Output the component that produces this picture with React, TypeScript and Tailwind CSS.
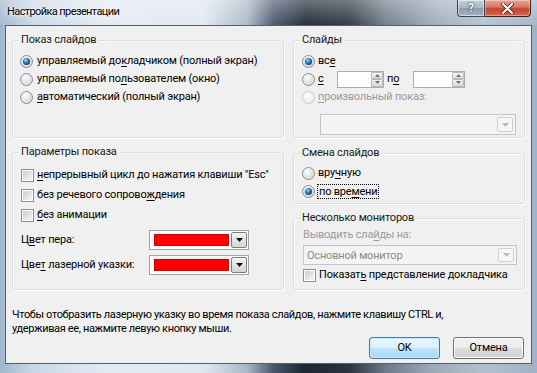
import React from "react";

function U({ children }: { children: React.ReactNode }) {
  return <span className="underline underline-offset-[2px] decoration-[1px]">{children}</span>;
}

function Radio({ checked = false, disabled = false }: { checked?: boolean; disabled?: boolean }) {
  return (
    <svg width="13" height="13" viewBox="0 0 13 13" className="shrink-0">
      <defs>
        <radialGradient id="rfill" cx="0.35" cy="0.3" r="0.8">
          <stop offset="0" stopColor="#ffffff" />
          <stop offset="1" stopColor="#cfd1d4" />
        </radialGradient>
        <radialGradient id="rfilld" cx="0.35" cy="0.3" r="0.8">
          <stop offset="0" stopColor="#ffffff" />
          <stop offset="1" stopColor="#ececec" />
        </radialGradient>
        <radialGradient id="rdot" cx="0.4" cy="0.35" r="0.7">
          <stop offset="0" stopColor="#a8e0fb" />
          <stop offset="0.45" stopColor="#2c7fc0" />
          <stop offset="1" stopColor="#0c3a66" />
        </radialGradient>
      </defs>
      <circle cx="6.5" cy="6.5" r="6" fill={disabled ? "url(#rfilld)" : "url(#rfill)"} stroke={disabled ? "#c9c9c9" : "#8a8c8f"} strokeWidth="1" />
      <circle cx="6.5" cy="6.5" r="4.6" fill="none" stroke={disabled ? "#eeeeee" : "#e2e3e5"} strokeWidth="0.8" />
      {checked && <circle cx="6.5" cy="6.5" r="3.6" fill="url(#rdot)" />}
    </svg>
  );
}

function Check() {
  return (
    <div className="w-[13px] h-[13px] shrink-0 border border-[#8e8f8f] bg-white p-[1px]">
      <div className="w-full h-full bg-gradient-to-br from-[#c9ccd1] to-[#f7f7f7]" />
    </div>
  );
}

function SmallArrow({ dir, color }: { dir: "up" | "down"; color: string }) {
  return (
    <svg width="5" height="3" viewBox="0 0 5 3">
      {dir === "up" ? <polygon points="0,3 5,3 2.5,0" fill={color} /> : <polygon points="0,0 5,0 2.5,3" fill={color} />}
    </svg>
  );
}

function DownArrow({ color }: { color: string }) {
  return (
    <svg width="7" height="4" viewBox="0 0 7 4">
      <polygon points="0,0 7,0 3.5,4" fill={color} />
    </svg>
  );
}

function Spin({ w }: { w: string }) {
  return (
    <div className={`${w} h-[17px] border border-[#abadb3] bg-white flex justify-end shrink-0`}>
      <div className="w-[12px] h-full flex flex-col">
        <div className="flex-1 border border-[#b5b8bd] rounded-[1px] bg-gradient-to-b from-[#f5f6f7] to-[#dfe2e6] flex items-center justify-center">
          <SmallArrow dir="up" color="#6b6f75" />
        </div>
        <div className="flex-1 border border-[#b5b8bd] rounded-[1px] bg-gradient-to-b from-[#f0f1f3] to-[#d8dbe0] flex items-center justify-center">
          <SmallArrow dir="down" color="#6b6f75" />
        </div>
      </div>
    </div>
  );
}

function DisabledCombo({ text, w, h }: { text?: string; w: string; h: string }) {
  return (
    <div className={`${w} ${h} border border-[#c5c5c5] bg-[#f4f4f4] flex items-center pl-[3px] pr-[2px]`}>
      <span className="flex-1 text-[#8b8b8b] leading-none whitespace-nowrap">{text}</span>
      <div className="w-[16px] h-[calc(100%-4px)] border border-[#d0d0d0] rounded-[2px] bg-[#f7f7f7] flex items-center justify-center">
        <DownArrow color="#b8b8b8" />
      </div>
    </div>
  );
}

function ColorPicker() {
  return (
    <div className="w-[100px] h-[20px] shrink-0 border border-[#a0a3a8] bg-white flex items-center pl-[4px] pr-[1px]">
      <div className="w-[76px] h-[12px] bg-[#ff0000] border border-[#d40000]" />
      <div className="ml-[2px] w-[16px] h-[16px] border border-[#7a7d82] rounded-[2px] bg-gradient-to-b from-[#f4f4f4] to-[#d4d4d4] flex items-center justify-center">
        <DownArrow color="#111111" />
      </div>
    </div>
  );
}

function Group({ title, h, children }: { title: string; h: string; children: React.ReactNode }) {
  return (
    <div className={`${h} w-full border border-[#d5dfe5] rounded-[3px] shadow-[inset_1px_1px_0_#ffffff,1px_1px_0_#ffffff] flex flex-col`}>
      <div className="-mt-[9px] ml-[6px] px-[2px] self-start bg-[#f0f0f0] leading-[16px] h-[16px] text-[#1a1a1a] whitespace-nowrap">{title}</div>
      {children}
    </div>
  );
}

function Button({ children, def = false }: { children: React.ReactNode; def?: boolean }) {
  return (
    <div
      className={`w-[71px] h-[22px] rounded-[3px] border flex items-center justify-center ${
        def
          ? "border-[#3c7fb1] bg-[linear-gradient(to_bottom,#eaf6fd_0%,#d9f0fc_50%,#bee6fd_51%,#a7d9f5_100%)] shadow-[inset_0_0_0_1px_#c6e8fb]"
          : "border-[#707070] bg-[linear-gradient(to_bottom,#f2f2f2_0%,#ebebeb_50%,#dddddd_51%,#cfcfcf_100%)] shadow-[inset_0_0_0_1px_#fcfcfc]"
      }`}
    >
      {children}
    </div>
  );
}

export default function App() {
  return (
    <div
      className="w-[537px] h-[373px] overflow-hidden flex flex-col font-['Roboto',sans-serif] text-[11px] tracking-[-0.2px] text-black bg-[linear-gradient(to_right,#9fb6cc_0%,#c9d8e6_6%,#e3ebf3_20%,#dfe8f0_38%,#a9b8c7_46%,#46556a_51%,#1c2530_57%,#2a3440_65%,#6e7b8a_72%,#9eabb9_81%,#b3c1cf_90%,#9fb2c6_100%)]"
    >
      {/* title bar */}
      <div className="h-[25px] flex items-start relative bg-[linear-gradient(to_bottom,rgba(255,255,255,0.35),rgba(255,255,255,0.05))]">
        <div className="pl-[7px] pt-[4px] text-[11px] tracking-[-0.6px] leading-[16px] text-black whitespace-nowrap [text-shadow:0_0_6px_#ffffff,0_0_3px_#ffffff]">
          Настройка презентации
        </div>
        <div className="ml-auto mr-[6px] flex">
          <div className="w-[28px] h-[17px] border border-[#3b4653] border-t-0 rounded-bl-[4px] bg-[linear-gradient(to_bottom,#c8d2dd_0%,#a8b4c2_50%,#8c9aab_51%,#a4b3c4_100%)] shadow-[inset_0_0_0_1px_rgba(255,255,255,0.5)] flex items-center justify-center">
            <span className="text-white font-bold text-[12px] leading-none [text-shadow:0_0_2px_#1d2a38,0_0_1px_#1d2a38]">?</span>
          </div>
          <div className="w-[46px] h-[17px] border border-[#3b2020] border-t-0 border-l-0 rounded-br-[4px] bg-[linear-gradient(to_bottom,#e8a595_0%,#d47563_45%,#c4432c_55%,#d2664e_100%)] shadow-[inset_0_0_0_1px_rgba(255,255,255,0.35)] flex items-center justify-center">
            <svg width="13" height="11" viewBox="0 0 13 11">
              <path d="M2 1 L11 10 M11 1 L2 10" stroke="#4a1a12" strokeWidth="3.6" strokeLinecap="square" />
              <path d="M2 1 L11 10 M11 1 L2 10" stroke="#ffffff" strokeWidth="2" strokeLinecap="square" />
            </svg>
          </div>
        </div>
      </div>

      {/* client */}
      <div className="ml-[5px] w-[527px] h-[339px] border border-[#55606c] bg-[#f0f0f0] flex flex-col whitespace-nowrap">
        <div className="flex pl-[6px] pr-[6px] pt-[14px] gap-[9px]">
          {/* left column */}
          <div className="w-[272px] flex flex-col gap-[14px]">
            <Group title="Показ слайдов" h="h-[98px]">
              <div className="flex flex-col pl-[7px] mt-[4px]">
                <div className="flex items-center h-[18px] gap-[4px]">
                  <Radio checked />
                  <span>управляемый до<U>к</U>ладчиком (полный экран)</span>
                </div>
                <div className="flex items-center h-[18px] gap-[4px]">
                  <Radio />
                  <span>управляемый по<U>л</U>ьзователем (окно)</span>
                </div>
                <div className="flex items-center h-[19px] gap-[4px]">
                  <Radio />
                  <span><U>а</U>втоматический (полный экран)</span>
                </div>
              </div>
            </Group>
            <Group title="Параметры показа" h="h-[138px]">
              <div className="flex flex-col pl-[8px] mt-[5px]">
                <div className="flex items-center h-[20px] gap-[3px]">
                  <Check />
                  <span><U>н</U>епрерывный цикл до нажатия клавиши "Esc"</span>
                </div>
                <div className="flex items-center h-[20px] gap-[3px]">
                  <Check />
                  <span>без речевого сопрово<U>ж</U>дения</span>
                </div>
                <div className="flex items-center h-[20px] gap-[3px]">
                  <Check />
                  <span><U>б</U>ез анимации</span>
                </div>
              </div>
              <div className="flex flex-col pl-[8px] pr-[34px] mt-[5px] gap-[5px]">
                <div className="flex items-center justify-between h-[20px]">
                  <span>Ц<U>в</U>ет пера:</span>
                  <ColorPicker />
                </div>
                <div className="flex items-center justify-between h-[20px]">
                  <span>Цве<U>т</U> лазерной указки:</span>
                  <ColorPicker />
                </div>
              </div>
            </Group>
          </div>

          {/* right column */}
          <div className="w-[232px] flex flex-col">
            <Group title="Слайды" h="h-[98px]">
              <div className="flex flex-col pl-[8px] mt-[4px]">
                <div className="flex items-center h-[18px] gap-[3px]">
                  <Radio checked />
                  <span>вс<U>е</U></span>
                </div>
                <div className="flex items-center h-[18px]">
                  <Radio />
                  <span className="ml-[3px] w-[19px]"><U>с</U></span>
                  <Spin w="w-[47px]" />
                  <span className="ml-[3px] w-[26px]">п<U>о</U></span>
                  <Spin w="w-[52px]" />
                </div>
                <div className="flex items-center h-[18px] gap-[3px] text-[#9b9b9b]">
                  <Radio disabled />
                  <span><U>п</U>роизвольный показ:</span>
                </div>
                <div className="pl-[18px] mt-[8px]">
                  <DisabledCombo w="w-[196px]" h="h-[21px]" />
                </div>
              </div>
            </Group>
            <div className="h-[15px]" />
            <Group title="Смена слайдов" h="h-[51px]">
              <div className="flex flex-col pl-[8px] mt-[3px]">
                <div className="flex items-center h-[18px] gap-[3px]">
                  <Radio />
                  <span>вру<U>ч</U>ную</span>
                </div>
                <div className="flex items-center h-[19px] gap-[2px]">
                  <Radio checked />
                  <span className="border border-dotted border-black px-[1px] leading-[13px]">по вре<U>м</U>ени</span>
                </div>
              </div>
            </Group>
            <div className="h-[14px]" />
            <Group title="Несколько мониторов" h="h-[72px]">
              <div className="flex flex-col pl-[9px] mt-[1px]">
                <div className="h-[17px] flex items-center text-[#9b9b9b]">Выводить сла<U>й</U>ды на:</div>
                <div className="mt-[1px]">
                  <DisabledCombo text="Основной монитор" w="w-[214px]" h="h-[20px]" />
                </div>
                <div className="flex items-center h-[21px] gap-[3px]">
                  <Check />
                  <span>Показат<U>ь</U> представление докладчика</span>
                </div>
              </div>
            </Group>
          </div>
        </div>

        <div className="pl-[6px] mt-[18px] leading-[14px] tracking-[-0.35px]">
          Чтобы отобразить лазерную указку во время показа слайдов, нажмите клавишу CTRL и,
          <br />
          удерживая ее, нажмите левую кнопку мыши.
        </div>
        <div className="flex justify-end gap-[13px] pr-[7px] mt-[1px]">
          <Button def>OK</Button>
          <Button>Отмена</Button>
        </div>
      </div>
    </div>
  );
}
